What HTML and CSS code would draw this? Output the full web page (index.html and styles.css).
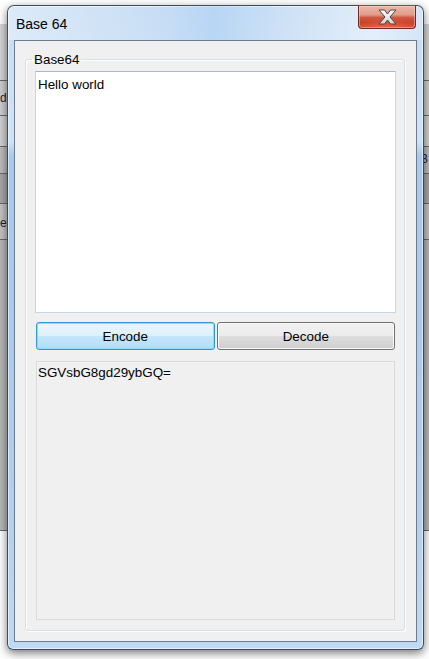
FILE: index.html
```html
<!DOCTYPE html>
<html lang="en">
<head>
<meta charset="utf-8">
<title>Base 64</title>
<link rel="stylesheet" href="styles.css">
</head>
<body>
<div class="desktop">
  <div class="backwin">
    <div class="brow b1"></div>
    <div class="brow b2"><span class="btext left-di">di</span></div>
    <div class="brow b3"></div>
    <div class="brow b4"><span class="btext right-ba">B</span></div>
    <div class="brow b5"></div>
    <div class="brow b6"><span class="btext left-e">e</span></div>
    <div class="brow b7"></div>
  </div>
  <div class="window">
    <div class="titlebar">
      <span class="title">Base 64</span>
      <button class="close" aria-label="Close">
        <svg width="19" height="16" viewBox="0 0 19 16">
          <defs>
            <linearGradient id="xg" x1="0" y1="0" x2="0" y2="1">
              <stop offset="0" stop-color="#ffffff"/>
              <stop offset="1" stop-color="#d2d2d2"/>
            </linearGradient>
          </defs>
          <polygon points="1,1 6.5,1 9.5,5 12.5,1 18,1 12,8 18,15 12.5,15 9.5,11 6.5,15 1,15 7,8" fill="url(#xg)" stroke="#474747" stroke-width="1" stroke-linejoin="round"/>
        </svg>
      </button>
    </div>
    <div class="client">
      <fieldset class="group">
        <legend class="legend">Base64</legend>
        <textarea class="input" spellcheck="false">Hello world</textarea>
        <div class="buttons">
          <button class="btn btn-focus">Encode</button>
          <button class="btn">Decode</button>
        </div>
        <div class="output">SGVsbG8gd29ybGQ=</div>
      </fieldset>
    </div>
  </div>
</div>
</body>
</html>
```
FILE: styles.css
```css
html, body {
  margin: 0;
  padding: 0;
  background: #ffffff;
}

.desktop {
  position: relative;
  width: 429px;
  height: 659px;
  overflow: hidden;
  font-family: "Liberation Sans", Arial, sans-serif;
}

/* window in the background (desktop canvas) */
.backwin {
  position: absolute;
  left: 0;
  top: 24px;
  width: 429px;
  display: flex;
  flex-direction: column;
  background: #cdcdcd;
}

.brow {
  border-bottom: 1px solid #6a6a6a;
  position: relative;
  overflow: hidden;
}
.b1 { height: 56px; background: #d6d6d6; }
.b2 { height: 34px; background: #cfcfcf; }
.b3 { height: 30px; background: #d2d2d2; }
.b4 { height: 26px; background: #bdbdbd; }
.b5 { height: 29px; background: #a9a9a9; }
.b6 { height: 35px; background: #c4c4c4; }
.b7 { height: 290px; background: #b8b8b8; }

.btext {
  position: absolute;
  font-size: 12px;
  color: #1c1c3a;
  line-height: 15px;
}
.left-di { left: 0; top: 10px; }
.right-ba { left: 420px; top: 5px; }
.left-e { left: 0; top: 12px; }

/* main window */
.window {
  position: relative;
  margin: 5px 0 0 7px;
  width: 417px;
  height: 645px;
  box-sizing: border-box;
  border: 1px solid rgba(28, 40, 56, 0.8);
  border-radius: 7px 7px 6px 6px;
  background: linear-gradient(to bottom,
    #c5dcf4 0px, #cfe3f7 135px, #a7c9ec 150px,
    #abcbee 330px, #b2d1f0 520px, #bedaf5 100%);
  box-shadow: 0 3px 10px rgba(0, 0, 0, 0.55),
              inset 0 0 0 1px rgba(255, 255, 255, 0.55);
  display: flex;
  flex-direction: column;
}

.titlebar {
  height: 34px;
  flex: none;
  display: flex;
  align-items: flex-start;
  justify-content: space-between;
  border-radius: 6px 6px 0 0;
  background: linear-gradient(90deg,
    rgba(255,255,255,0.4) 0%, rgba(255,255,255,0.05) 35%,
    rgba(160,200,245,0.35) 50%, rgba(255,255,255,0.1) 65%,
    rgba(255,255,255,0.5) 88%, rgba(255,255,255,0.25) 100%);
}

.title {
  margin: 10px 0 0 8px;
  font-size: 14px;
  line-height: 16px;
  color: #000;
}

.close {
  margin: -1px 7px 0 0;
  width: 58px;
  height: 24px;
  padding: 0;
  border: 1px solid #6e2a22;
  border-top-color: #8a4a40;
  border-radius: 0 0 4px 4px;
  background:
    radial-gradient(ellipse 60% 45% at 50% 100%, rgba(255,120,80,0.55), rgba(255,120,80,0) 100%),
    linear-gradient(to bottom, #ecb7aa 0%, #e09c8b 40%, #cf5a44 52%, #c6412a 75%, #d24c33 100%);
  box-shadow: inset 0 0 0 1px rgba(255, 220, 210, 0.45);
  display: flex;
  align-items: center;
  justify-content: center;
}
.close svg { display: block; margin-top: -1px; }

.client {
  flex: none;
  margin: 0 6px;
  height: 602px;
  box-sizing: border-box;
  border: 1px solid #6c7b8d;
  background: #f0f0f0;
  display: flex;
  flex-direction: column;
}

.group {
  margin: 11px 11px 10px 10px;
  padding: 4px 8px 10px 9px;
  min-width: 0;
  flex: 1;
  border: 1px solid #d5dfe5;
  border-radius: 3px;
  box-shadow: inset 1px 1px 0 #ffffff, 1px 1px 0 #ffffff;
  display: flex;
  flex-direction: column;
}

.legend {
  margin-left: -3px;
  padding: 0 2px;
  font-size: 13.4px;
  line-height: 15px;
  color: #000;
}

.input {
  display: block;
  width: 361px;
  height: 242px;
  box-sizing: border-box;
  margin: 0;
  padding: 5px 2px;
  border: 1px solid #c3d7ea;
  border-top-color: #a3b9cf;
  background: #ffffff;
  font-family: "Liberation Sans", Arial, sans-serif;
  font-size: 13.4px;
  line-height: 15px;
  color: #000;
  resize: none;
  outline: none;
  overflow: hidden;
}

.buttons {
  margin: 9px 1px 0;
  display: flex;
  gap: 2px;
}

.btn {
  flex: 1;
  height: 28px;
  box-sizing: border-box;
  padding: 1px 0 0;
  border: 1px solid #707070;
  border-radius: 3px;
  background: linear-gradient(to bottom, #f2f2f2 0%, #ebebeb 50%, #dddddd 51%, #cfcfcf 100%);
  box-shadow: inset 0 0 0 1px #fbfbfb;
  font-family: "Liberation Sans", Arial, sans-serif;
  font-size: 13.4px;
  line-height: 25px;
  color: #000;
}

.btn-focus {
  border-color: #2f9ad8;
  background: linear-gradient(to bottom, #eaf6fd 0%, #dcf1fc 50%, #c4e7fb 51%, #b2ddf7 100%);
  box-shadow: inset 0 0 0 1px #92d8f8;
}

.output {
  margin: 11px 1px 0;
  height: 259px;
  box-sizing: border-box;
  padding: 3px 1px;
  border: 1px solid #d9d9d9;
  background: #f0f0f0;
  box-shadow: inset 0 0 0 1px #f4f4f4;
  font-size: 13.4px;
  line-height: 15px;
  color: #000;
}
```
